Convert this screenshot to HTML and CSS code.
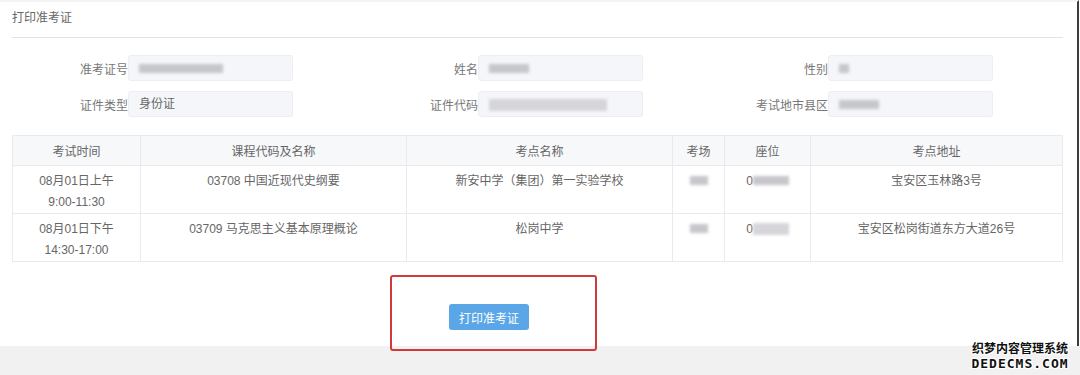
FILE: index.html
```html
<!DOCTYPE html>
<html>
  <head>
    <meta charset="utf-8">
    <title>打印准考证</title>
    <link rel="stylesheet" href="styles.css">
  </head>
<body>
  <div class="screen">
    <!-- 标题 -->
    <div class="panelHead">打印准考证</div>
    <!-- 考生信息 -->
    <div class="infoForm">
      <div class="field">
        <span class="fieldTxt">准考证号</span>
        <div class="fieldInput"><span class="mask" style="width:84px"></span></div>
      </div>
      <div class="field">
        <span class="fieldTxt">姓名</span>
        <div class="fieldInput"><span class="mask" style="width:40px"></span></div>
      </div>
      <div class="field">
        <span class="fieldTxt">性别</span>
        <div class="fieldInput"><span class="mask" style="width:10px"></span></div>
      </div>
      <div class="field">
        <span class="fieldTxt">证件类型</span>
        <div class="fieldInput">身份证</div>
      </div>
      <div class="field">
        <span class="fieldTxt">证件代码</span>
        <div class="fieldInput"><span class="mask light" style="width:118px"></span></div>
      </div>
      <div class="field">
        <span class="fieldTxt">考试地市县区</span>
        <div class="fieldInput"><span class="mask" style="width:40px"></span></div>
      </div>
    </div>
    <!-- 考试安排 -->
    <table class="examTable">
      <colgroup>
        <col style="width:128px">
        <col style="width:266px">
        <col style="width:266px">
        <col style="width:52px">
        <col style="width:86px">
        <col style="width:252px">
      </colgroup>
      <thead>
        <tr>
          <th>考试时间</th>
          <th>课程代码及名称</th>
          <th>考点名称</th>
          <th>考场</th>
          <th>座位</th>
          <th>考点地址</th>
        </tr>
      </thead>
      <tbody>
        <tr>
          <td>08月01日上午<br>9:00-11:30</td>
          <td>03708 中国近现代史纲要</td>
          <td>新安中学（集团）第一实验学校</td>
          <td><span class="mask" style="width:18px"></span></td>
          <td>0<span class="mask" style="width:36px"></span></td>
          <td>宝安区玉林路3号</td>
        </tr>
        <tr>
          <td>08月01日下午<br>14:30-17:00</td>
          <td>03709 马克思主义基本原理概论</td>
          <td>松岗中学</td>
          <td><span class="mask" style="width:18px"></span></td>
          <td>0<span class="mask light" style="width:36px"></span></td>
          <td>宝安区松岗街道东方大道26号</td>
        </tr>
      </tbody>
    </table>
    <!-- 打印按钮 -->
    <div class="btnRow">
      <button class="printBtn">打印准考证</button>
    </div>
  </div>
  <div class="footBand"></div>
  <!-- 标注框 -->
  <div class="markBox"></div>
  <!-- 水印 -->
  <div class="watermark">
    <div class="wmCn">织梦内容管理系统</div>
    <div class="wmEn">DEDECMS.COM</div>
  </div>
</body>
</html>
```

FILE: styles.css
```css
	html, body {
		margin: 0;
		padding: 0;
		background: #fff;
		font-family: "Liberation Sans", "Noto Sans CJK SC", sans-serif;
		font-size: 12px;
		color: #666;
	}
	body {
		position: relative;
		width: 1080px;
		height: 375px;
		overflow: hidden;
	}
	.screen {
		width: 1065px;
		height: 346px;
		padding: 0 0 0 12px;
		border-right: 2px solid #3c3c3c;
		border-top: 2px solid #f4f4f4;
		box-sizing: border-box;
		width: 1079px;
		padding-right: 14px;
	}
	.panelHead {
		height: 35px;
		line-height: 32px;
		border-bottom: 1px solid #e3e3e3;
		color: #666;
	}
	.infoForm {
		display: grid;
		grid-template-columns: repeat(3, 350px);
		row-gap: 10px;
		padding-top: 17px;
	}
	.field {
		display: flex;
		align-items: center;
		height: 26px;
	}
	.fieldTxt {
		width: 116px;
		text-align: right;
		color: #777;
	}
	.fieldInput {
		box-sizing: border-box;
		width: 165px;
		height: 26px;
		line-height: 24px;
		padding-left: 10px;
		background: #f4f6f9;
		border: 1px solid #eceef2;
		border-radius: 3px;
		color: #666;
	}
	.mask {
		display: inline-block;
		vertical-align: middle;
		height: 9px;
		background: #c6c6cc;
		filter: blur(1.5px);
	}
	.mask.light {
		background: #d6d6da;
		height: 12px;
	}
	.examTable {
		margin-top: 18px;
		width: 1050px;
		border-collapse: collapse;
		table-layout: fixed;
	}
	.examTable th,
	.examTable td {
		border: 1px solid #e8eaee;
		text-align: center;
		font-weight: normal;
		color: #666;
	}
	.examTable th {
		height: 29px;
		background: #f7f8fa;
		padding: 0;
	}
	.examTable td {
		height: 47px;
		padding: 5px 0 0 0;
		vertical-align: top;
		line-height: 21px;
		box-sizing: border-box;
	}
	.examTable td .mask {
		margin-top: -2px;
	}
	.btnRow {
		padding: 42px 0 0 437px;
	}
	.printBtn {
		width: 80px;
		height: 26px;
		border: none;
		border-radius: 3px;
		background: #5aa6e6;
		color: #fff;
		font-family: "Liberation Sans", "Noto Sans CJK SC", sans-serif;
		font-size: 12px;
		padding: 0;
	}
	.footBand {
		height: 29px;
		background: #f1f1f1;
	}
	.markBox {
		position: absolute;
		left: 390px;
		top: 275px;
		width: 207px;
		height: 76px;
		box-sizing: border-box;
		border: 2px solid #d13a3a;
		border-radius: 3px;
	}
	.watermark {
		position: absolute;
		left: 970px;
		top: 339px;
		width: 100px;
		text-align: center;
		color: #111;
		font-weight: bold;
		text-shadow: 1px 0 #fff, -1px 0 #fff, 0 1px #fff, 0 -1px #fff, 1px 1px #fff, -1px -1px #fff, 1px -1px #fff, -1px 1px #fff;
	}
	.wmCn {
		font-family: "Noto Sans CJK SC", sans-serif;
		font-size: 12px;
		line-height: 17px;
		letter-spacing: 0;
	}
	.wmEn {
		font-family: "DejaVu Sans Mono", monospace;
		font-size: 13px;
		line-height: 16px;
		letter-spacing: 1px;
	}
```
